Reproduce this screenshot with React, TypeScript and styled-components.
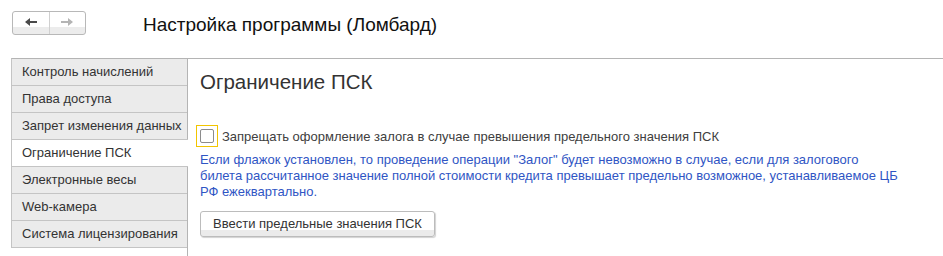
import React from 'react'
import styled, { createGlobalStyle } from 'styled-components'

const GlobalStyle = createGlobalStyle`
    html, body {
        margin: 0;
        padding: 0;
        background: #fff;
    }
    body {
        font-family: "Liberation Sans", Arial, sans-serif;
        color: #333;
    }
`

const tabs = [
    'Контроль начислений',
    'Права доступа',
    'Запрет изменения данных',
    'Ограничение ПСК',
    'Электронные весы',
    'Web-камера',
    'Система лицензирования',
]

const activeTab = 'Ограничение ПСК'

function ArrowIcon({ dir, color }: { dir: 'left' | 'right'; color: string }): JSX.Element {
    const d = dir === 'left' ? 'M1 5 L6 1 L6 4 L13 4 L13 6 L6 6 L6 9 Z' : 'M13 5 L8 1 L8 4 L1 4 L1 6 L8 6 L8 9 Z'
    return (
        <svg width="14" height="10" viewBox="0 0 14 10">
            <path d={d} fill={color} />
        </svg>
    )
}

function App(): JSX.Element {
    return (
        <Page>
            <GlobalStyle />
            <Header>
                <NavGroup>
                    <NavButton>
                        <ArrowIcon dir="left" color="#4a4a4a" />
                    </NavButton>
                    <NavButton disabled>
                        <ArrowIcon dir="right" color="#b4b4b4" />
                    </NavButton>
                </NavGroup>
                <Title>Настройка программы (Ломбард)</Title>
            </Header>
            <Body>
                <TabList>
                    {tabs.map((tab) => (
                        <Tab key={tab} active={tab === activeTab}>
                            {tab}
                        </Tab>
                    ))}
                </TabList>
                <Content>
                    <SectionTitle>Ограничение ПСК</SectionTitle>
                    <CheckRow>
                        <CheckFocus>
                            <CheckBox />
                        </CheckFocus>
                        <CheckLabel>
                            Запрещать оформление залога в случае превышения предельного значения ПСК
                        </CheckLabel>
                    </CheckRow>
                    <Hint>
                        Если флажок установлен, то проведение операции "Залог" будет невозможно в случае, если
                        для залогового билета рассчитанное значение полной стоимости кредита превышает
                        предельно возможное, устанавливаемое ЦБ РФ ежеквартально.
                    </Hint>
                    <ActionButton>Ввести предельные значения ПСК</ActionButton>
                </Content>
            </Body>
        </Page>
    )
}

export default App

const Page = styled.div`
    width: 943px;
    height: 256px;
    overflow: hidden;
    display: flex;
    flex-direction: column;
`

const Header = styled.div`
    display: flex;
    align-items: center;
    height: 58px;
    padding: 0 0 0 12px;
    box-sizing: border-box;
`

const NavGroup = styled.div`
    display: flex;
    width: 74px;
    height: 24px;
    border: 1px solid #b8b8b8;
    border-radius: 3px;
    box-sizing: border-box;
    overflow: hidden;
    background: linear-gradient(to bottom, #fff 0, #fff 70%, #ececec 70%, #ececec 100%);
    margin-top: -12px;
`

const NavButton = styled.button`
    flex: 1;
    border: none;
    background: transparent;
    padding: 0 0 3px;
    display: flex;
    align-items: center;
    justify-content: center;
    & + & {
        border-left: 1px solid #d0d0d0;
    }
`

const Title = styled.h1`
    margin: -9px 0 0 57px;
    font-size: 19px;
    font-weight: normal;
    color: #111;
    line-height: 24px;
`

const Body = styled.div`
    flex: 1;
    display: flex;
    border-top: 1px solid #b4b4b4;
    margin-left: 188px;
`

const TabList = styled.div`
    display: flex;
    flex-direction: column;
    width: 177px;
    margin-left: -177px;
    margin-top: -1px;
    border-right: 1px solid #b4b4b4;
    box-sizing: border-box;
`

const Tab = styled.div<{ active?: boolean }>`
    height: 28px;
    flex-shrink: 0;
    box-sizing: border-box;
    padding: 5px 0 0 10px;
    font-size: 13px;
    line-height: 16px;
    color: #333;
    white-space: nowrap;
    background: ${(p) => (p.active ? '#fff' : '#ebebeb')};
    border: 1px solid #c4c4c4;
    border-right: none;
    margin-top: -1px;
    margin-right: ${(p) => (p.active ? '-1px' : '0')};
    position: relative;
    &:first-child {
        margin-top: 0;
        border-top-color: #b4b4b4;
    }
`

const Content = styled.div`
    display: flex;
    flex-direction: column;
    align-items: flex-start;
    padding: 10px 0 0 12px;
`

const SectionTitle = styled.h2`
    margin: 0;
    font-size: 20.5px;
    font-weight: normal;
    color: #333;
    line-height: 26px;
`

const CheckRow = styled.div`
    display: flex;
    align-items: center;
    margin: 30px 0 0 -4px;
`

const CheckFocus = styled.div`
    width: 22px;
    height: 22px;
    box-sizing: border-box;
    border: 1px solid #f2c500;
    display: flex;
    align-items: center;
    justify-content: center;
`

const CheckBox = styled.div`
    width: 14px;
    height: 14px;
    box-sizing: border-box;
    border: 1px solid #8c8c8c;
    border-radius: 2px;
    background: #fff;
`

const CheckLabel = styled.span`
    margin-left: 4px;
    font-size: 13px;
    color: #404040;
`

const Hint = styled.p`
    margin: 5px 0 0;
    max-width: 700px;
    font-size: 13px;
    line-height: 16px;
    color: #2f55c4;
`

const ActionButton = styled.button`
    margin-top: 11px;
    width: 235px;
    height: 26px;
    box-sizing: border-box;
    border: 1px solid #bcbcbc;
    border-radius: 3px;
    background: linear-gradient(to bottom, #fff 0, #fff 75%, #ebebeb 75%, #ebebeb 100%);
    box-shadow: 1px 1px 1px rgba(0, 0, 0, 0.18);
    font-family: "Liberation Sans", Arial, sans-serif;
    font-size: 13px;
    color: #333;
    padding: 0 0 2px;
`
